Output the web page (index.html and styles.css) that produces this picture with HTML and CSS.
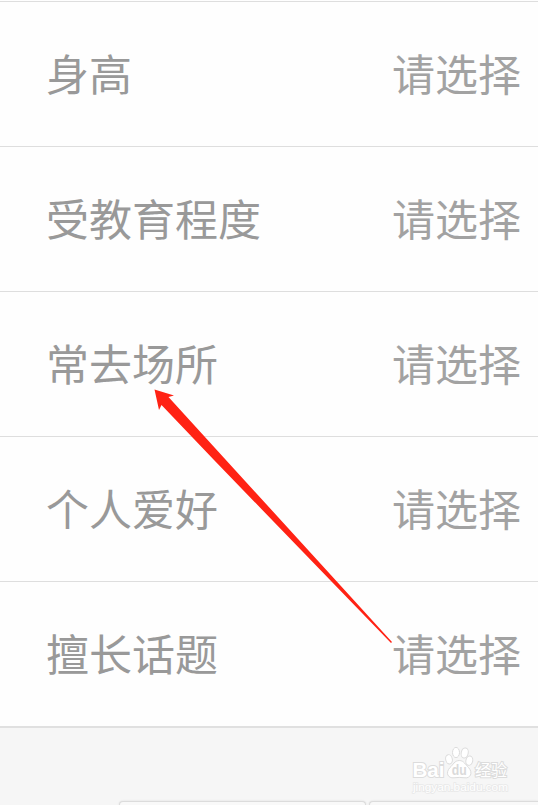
FILE: index.html
```html
<!DOCTYPE html>
<html lang="zh-CN">
<head>
<meta charset="utf-8">
<title>个人资料</title>
<link rel="stylesheet" href="styles.css">
</head>
<body>
<main class="screen">
  <ul class="list">
    <li class="row"><span class="label">身高</span><span class="value">请选择</span></li>
    <li class="row"><span class="label">受教育程度</span><span class="value">请选择</span></li>
    <li class="row"><span class="label">常去场所</span><span class="value">请选择</span></li>
    <li class="row"><span class="label">个人爱好</span><span class="value">请选择</span></li>
    <li class="row"><span class="label">擅长话题</span><span class="value">请选择</span></li>
  </ul>
  <footer class="footer">
    <div class="tab tab-first"></div>
    <div class="tab tab-last"></div>
  </footer>
  <svg class="arrow" viewBox="0 0 538 805" aria-hidden="true">
    <path d="M154.500 389.500L174 395.500L168.500 397L392 642L391 643L214 460L161.500 405L159 410Z"/>
  </svg>
  <svg class="watermark" viewBox="0 0 110 60" aria-hidden="true">
    <g class="mark">
      <text class="brand" x="4.500" y="35" textLength="32" lengthAdjust="spacingAndGlyphs">Bai</text>
      <ellipse cx="41" cy="17.300" rx="3.300" ry="4.700" transform="rotate(-12 41 17.300)"/>
      <ellipse cx="48" cy="10.500" rx="3.500" ry="5.100"/>
      <ellipse cx="56.700" cy="11" rx="3.500" ry="5.100" transform="rotate(12 56.700 11)"/>
      <ellipse cx="61.300" cy="18.700" rx="3.400" ry="4.700" transform="rotate(12 61.300 18.700)"/>
      <path d="M51.300 18.500C56 18.500 57.500 23 60.500 25.500C65.500 31 62 36.500 57 35.800Q51 35 46 35.800C40 36.500 37 31 42 25.500C45 23 46.500 18.500 51.300 18.500Z"/>
      <text class="du" x="43.700" y="33" textLength="15" lengthAdjust="spacingAndGlyphs">du</text>
      <text class="jingyan" x="67" y="34" textLength="32" lengthAdjust="spacingAndGlyphs">经验</text>
      <text class="domain" x="5" y="48.500" textLength="95" lengthAdjust="spacingAndGlyphs">jingyan.baidu.com</text>
    </g>
  </svg>
</main>
</body>
</html>
```
FILE: styles.css
```css
* { box-sizing: border-box; }

body {
  margin: 0;
  background: #fff;
  font-family: "Noto Sans CJK SC", sans-serif;
}

.screen {
  position: relative;
  display: flex;
  flex-direction: column;
  width: 538px;
  height: 805px;
  padding-top: 1px;
  overflow: hidden;
  background: #fefefe;
}

.list {
  margin: 0;
  padding: 0;
  list-style: none;
}

.row {
  display: flex;
  align-items: center;
  justify-content: space-between;
  height: 145px;
  padding: 0 17px 5px 46px;
  border-top: 1px solid #dedede;
  font-size: 43px;
  line-height: 64px;
  font-weight: 400;
}

.label { color: #999; }
.value { color: #a2a2a2; }

.footer {
  display: flex;
  flex: 1;
  align-items: flex-end;
  gap: 3px;
  padding-left: 119px;
  border-top: 2px solid #e0e0e0;
  background: #f6f6f6;
}

.tab {
  height: 4px;
  border: 1px solid #dcdcdc;
  border-bottom: 0;
  background: #f9f9f9;
  box-shadow: 0 0 2px #dadada;
}

.tab-first {
  width: 247px;
  border-radius: 4px 4px 0 0;
}

.tab-last {
  flex: 1;
  border-right: 0;
  border-radius: 4px 0 0 0;
}

.arrow {
  position: absolute;
  inset: 0;
  width: 538px;
  height: 805px;
  fill: #ff2214;
}

.watermark {
  position: absolute;
  left: 408px;
  top: 742px;
  width: 110px;
  height: 60px;
  font-family: "Liberation Sans", sans-serif;
}

.mark {
  fill: #fff;
  stroke: #dcdcdc;
  stroke-width: 1;
}

.mark text { paint-order: stroke; stroke-width: 2px; }
.brand { font-size: 21px; font-weight: 700; }
.mark .du { font-size: 15px; font-weight: 700; fill: #dadada; stroke: none; }
.jingyan { font-family: "Noto Sans CJK SC", sans-serif; font-size: 16px; font-weight: 400; }
.mark .domain { font-size: 11px; stroke: #e8e8e8; stroke-width: 1.5px; }
```
